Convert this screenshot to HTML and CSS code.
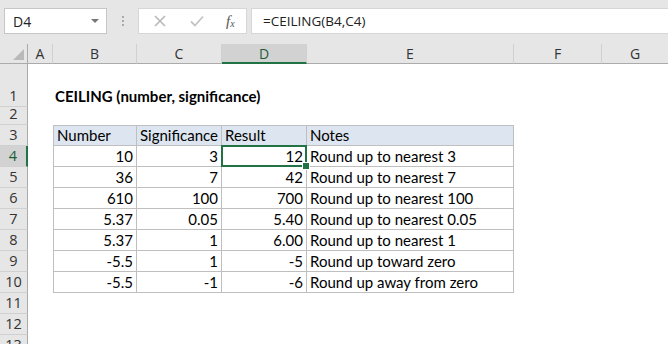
FILE: index.html
```html
<!DOCTYPE html>
<html>
<head>
<meta charset="utf-8">
<link rel="stylesheet" href="styles.css">
</head>
<body>
<div class="app">
  <div class="toolbar">
    <div class="namebox"><span>D4</span><span class="caret"></span></div>
    <div class="grip"><i></i><i></i><i></i></div>
    <div class="fbtns">
      <svg class="ico" width="14" height="14" viewBox="0 0 14 14"><path d="M2 2L12 12M12 2L2 12" stroke="#b8b8b8" stroke-width="1.6" fill="none"/></svg>
      <svg class="ico" width="16" height="14" viewBox="0 0 16 14"><path d="M2 7.5L6 11.5L14 2.5" stroke="#c4c4c4" stroke-width="1.8" fill="none"/></svg>
      <span class="fx">f<sub>x</sub></span>
    </div>
    <div class="formula">=CEILING(B4,C4)</div>
  </div>
  <div class="sheet">
    <div class="ch corner"><span class="tri"></span></div>
    <div class="ch">A</div><div class="ch">B</div><div class="ch">C</div><div class="ch sel">D</div><div class="ch">E</div><div class="ch">F</div><div class="ch last">G</div>

    <div class="rh">1</div><div class="c"></div><div class="c title">CEILING (number, significance)</div><div class="c"></div><div class="c"></div><div class="c"></div><div class="c"></div><div class="c"></div>
    <div class="rh">2</div><div class="c"></div><div class="c"></div><div class="c"></div><div class="c"></div><div class="c"></div><div class="c"></div><div class="c"></div>

    <div class="rh">3</div><div class="c"></div><div class="t th first">Number</div><div class="t th">Significance</div><div class="t th">Result</div><div class="t th">Notes</div><div class="c"></div><div class="c"></div>
    <div class="rh rsel">4</div><div class="c"></div><div class="t n first">10</div><div class="t n">3</div><div class="t n active">12</div><div class="t">Round up to nearest 3</div><div class="c"></div><div class="c"></div>
    <div class="rh">5</div><div class="c"></div><div class="t n first">36</div><div class="t n">7</div><div class="t n">42</div><div class="t">Round up to nearest 7</div><div class="c"></div><div class="c"></div>
    <div class="rh">6</div><div class="c"></div><div class="t n first">610</div><div class="t n">100</div><div class="t n">700</div><div class="t">Round up to nearest 100</div><div class="c"></div><div class="c"></div>
    <div class="rh">7</div><div class="c"></div><div class="t n first">5.37</div><div class="t n">0.05</div><div class="t n">5.40</div><div class="t">Round up to nearest 0.05</div><div class="c"></div><div class="c"></div>
    <div class="rh">8</div><div class="c"></div><div class="t n first">5.37</div><div class="t n">1</div><div class="t n">6.00</div><div class="t">Round up to nearest 1</div><div class="c"></div><div class="c"></div>
    <div class="rh">9</div><div class="c"></div><div class="t n first">-5.5</div><div class="t n">1</div><div class="t n">-5</div><div class="t">Round up toward zero</div><div class="c"></div><div class="c"></div>
    <div class="rh">10</div><div class="c"></div><div class="t n first">-5.5</div><div class="t n">-1</div><div class="t n">-6</div><div class="t">Round up away from zero</div><div class="c"></div><div class="c"></div>
    <div class="rh">11</div><div class="c"></div><div class="c"></div><div class="c"></div><div class="c"></div><div class="c"></div><div class="c"></div><div class="c"></div>
    <div class="rh">12</div><div class="c"></div><div class="c"></div><div class="c"></div><div class="c"></div><div class="c"></div><div class="c"></div><div class="c"></div>
    <div class="rh">13</div><div class="c"></div><div class="c"></div><div class="c"></div><div class="c"></div><div class="c"></div><div class="c"></div><div class="c"></div>
  </div>
</div>
</body>
</html>
```
FILE: styles.css
```css
* { box-sizing: border-box; }
html, body { margin: 0; padding: 0; background: #fff; }
body { width: 668px; height: 344px; overflow: hidden; font-family: "Lato", "Open Sans", sans-serif; }

.toolbar {
  height: 44px;
  background: #e6e6e6;
  display: flex;
  align-items: flex-start;
  padding: 8px 0 0 4px;
}
.namebox {
  width: 103px; height: 26px;
  background: #fff;
  border: 1px solid #c6c6c6;
  display: flex; align-items: center; justify-content: space-between;
  padding: 0 7px 0 8px;
  font-family: "Open Sans", sans-serif;
  font-size: 14px; color: #222;
}
.caret {
  width: 0; height: 0;
  border-left: 4px solid transparent; border-right: 4px solid transparent;
  border-top: 4px solid #777;
}
.grip {
  width: 31px; height: 26px;
  display: flex; flex-direction: column; align-items: center; justify-content: center; gap: 2px;
}
.grip i { width: 2px; height: 2px; background: #aaa; display: block; }
.fbtns {
  width: 109px; height: 26px;
  background: #fff;
  border: 1px solid #d6d6d6;
  display: flex; align-items: center;
  padding: 0 0 0 14px;
}
.fbtns .ico:first-child { margin-right: 22px; }
.fbtns .ico:nth-child(2) { margin-right: 21px; }
.fx { font-family: "Liberation Serif", serif; font-style: italic; font-size: 15px; color: #555; line-height: 1; }
.fx sub { font-size: 10px; vertical-align: -1px; }
.formula {
  flex: 1; height: 26px; margin-left: 4px;
  background: #fff;
  border: 1px solid #d6d6d6; border-right: none;
  padding: 0 0 0 11px;
  display: flex; align-items: center;
  font-family: "Open Sans", sans-serif; font-size: 13.5px; color: #222;
}

.sheet {
  display: grid;
  grid-template-columns: 28px 25px 84px 85px 85px 207px 88px 66px;
  grid-template-rows: 20px 43px 18px repeat(11, 21px);
}
.ch {
  background: #e6e6e6;
  border-right: 1px solid #d0d0d0;
  border-bottom: 1px solid #ababab;
  display: flex; align-items: center; justify-content: center;
  font-family: "Open Sans", sans-serif; font-size: 14px; color: #333;
}
.ch.last { border-right: none; }
.ch.sel { background: #d2d2d2; color: #1e5d3a; border-bottom: 2px solid #217346; padding-top: 1px; }
.corner { position: relative; border-right: 1px solid #ababab; }
.tri {
  position: absolute; right: 3px; bottom: 3px;
  width: 0; height: 0;
  border-left: 11px solid transparent;
  border-bottom: 11px solid #b9b9b9;
}
.rh {
  background: #e6e6e6;
  border-right: 1px solid #ababab;
  border-bottom: 1px solid #d0d0d0;
  display: flex; align-items: flex-end; justify-content: center;
  font-family: "Open Sans", sans-serif; font-size: 14.5px; color: #333; line-height: 20px;
}
.rh.rsel { background: #d2d2d2; color: #1e5d3a; border-right: 2px solid #217346; }

.c, .t {
  display: flex; align-items: flex-end;
  font-size: 15px; color: #000; line-height: 19px;
  white-space: nowrap;
}
.title { font-weight: bold; padding-left: 2px; overflow: visible; padding-bottom: 1px; }
.t {
  border-right: 1px solid #bfbfbf;
  border-bottom: 1px solid #bfbfbf;
  padding: 0 3px 0 3px;
}
.t.first { border-left: 1px solid #bfbfbf; }
.t.th { background: #dde6f0; border-top: 1px solid #bfbfbf; }
.t.n { justify-content: flex-end; }
.active { position: relative; }
.active::after {
  content: ""; position: absolute;
  left: -1px; top: -1px; right: -1px; bottom: -1px;
  border: 2px solid #217346;
}
.active::before {
  content: ""; position: absolute;
  right: -4px; bottom: -4px;
  width: 6px; height: 6px;
  background: #217346; border: 1px solid #fff;
  z-index: 2;
}
```
